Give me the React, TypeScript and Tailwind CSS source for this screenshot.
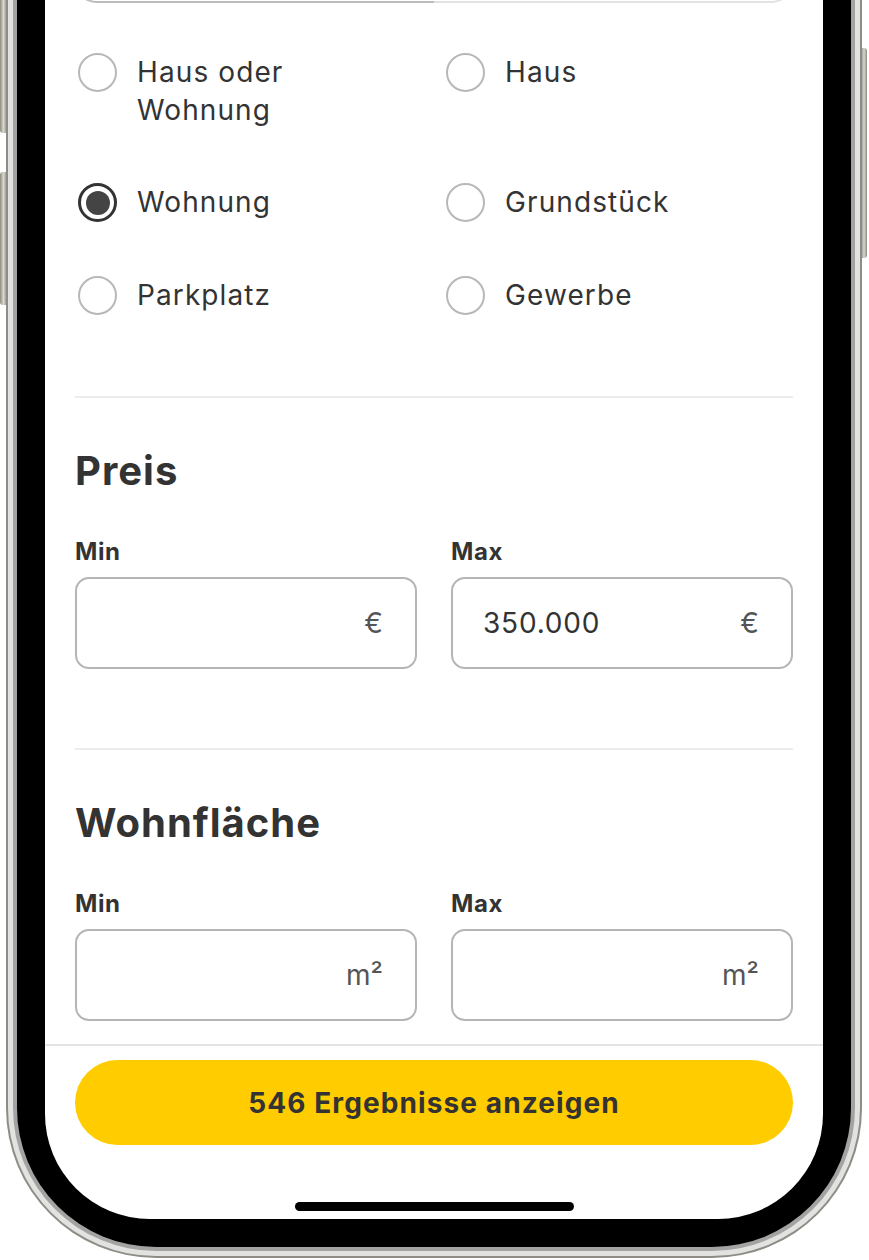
import type { ReactNode } from 'react';

const propertyTypes = [
  { label: 'Haus oder Wohnung', checked: false },
  { label: 'Haus', checked: false },
  { label: 'Wohnung', checked: true },
  { label: 'Grundstück', checked: false },
  { label: 'Parkplatz', checked: false },
  { label: 'Gewerbe', checked: false },
];

function Radio({ checked }: { checked: boolean }) {
  if (checked) {
    return (
      <span className="ml-[3px] flex h-[39px] w-[39px] shrink-0 items-center justify-center rounded-full border-[3px] border-[#333333] bg-white">
        <span className="h-[24px] w-[24px] rounded-full bg-[#444444]" />
      </span>
    );
  }
  return <span className="ml-[3px] block h-[39px] w-[39px] shrink-0 rounded-full border-2 border-[#b8b8b8] bg-white" />;
}

function Field({ label, value, unit }: { label: string; value?: string; unit: ReactNode }) {
  return (
    <div className="flex flex-col">
      <span className="text-[24px] leading-[32px] font-bold tracking-[0.6px] text-[#333333]">{label}</span>
      <div className="mt-[9px] flex h-[92px] items-center justify-between rounded-[14px] border-2 border-[#b5b5b5] pl-[30px] pr-[32px]">
        <span className="text-[28px] leading-[38px] tracking-[0.8px] text-[#333333]">{value}</span>
        <span className="text-[28px] leading-[38px] text-[#555555]">{unit}</span>
      </div>
    </div>
  );
}

function RangeSection({ title, unit, max }: { title: string; unit: ReactNode; max?: string }) {
  return (
    <section className="pt-[49px]">
      <h2 className="text-[40px] leading-[48px] font-bold tracking-[1px] text-[#333333]">{title}</h2>
      <div className="mt-[41px] grid grid-cols-2 gap-x-[34px]">
        <Field label="Min" unit={unit} />
        <Field label="Max" value={max} unit={unit} />
      </div>
    </section>
  );
}

export default function App() {
  return (
    <div className="relative h-[1260px] w-[869px] overflow-hidden bg-white" style={{ fontFamily: 'Inter, "Noto Sans", sans-serif' }}>
      {/* side buttons */}
      <div className="absolute left-0 top-[-10px] h-[143px] w-[7px] rounded-l-[3px] bg-gradient-to-r from-[#8f8c7c] via-[#d8d8d4] to-[#8a8a86]" />
      <div className="absolute left-0 top-[172px] h-[133px] w-[7px] rounded-l-[3px] bg-gradient-to-r from-[#8f8c7c] via-[#d8d8d4] to-[#8a8a86]" />
      <div className="absolute right-[2px] top-[48px] h-[210px] w-[6px] rounded-r-[3px] bg-gradient-to-r from-[#8a8a86] via-[#d8d8d4] to-[#8f8c7c]" />

      {/* phone frame */}
      <div className="relative ml-[6px] w-[856px] rounded-b-[150px] bg-[#8e8c84] px-[2px] pb-[2px]">
        <div className="rounded-b-[148px] bg-[#e2e2e0] px-[5px] pb-[5px]">
          <div className="rounded-b-[143px] bg-[#a3a3a1] px-[4px] pb-[4px]">
            <div className="rounded-b-[139px] bg-black px-[28px] pb-[28px]">
              <div className="flex h-[1219px] flex-col overflow-hidden rounded-b-[105px] bg-white">
                <div className="flex-1 overflow-hidden px-[30px]">
                  {/* bottom of segmented control above */}
                  <div className="-mt-[40px] flex h-[43px]">
                    <div className="w-1/2 rounded-l-[26px] border-2 border-r-0 border-[#bdbdbd]" />
                    <div className="w-1/2 rounded-r-[26px] border-2 border-l-0 border-[#e2e2e2]" />
                  </div>

                  <div className="mt-[50px] grid grid-cols-[368px_1fr] gap-y-[54px]">
                    {propertyTypes.map((item) => (
                      <label key={item.label} className="flex items-start gap-[20px]">
                        <Radio checked={item.checked} />
                        <span className="max-w-[190px] text-[28px] leading-[38px] tracking-[1.1px] text-[#333333]">{item.label}</span>
                      </label>
                    ))}
                  </div>

                  <div className="mt-[81px] h-[2px] bg-[#ececec]" />
                  <RangeSection title="Preis" unit="€" max="350.000" />

                  <div className="mt-[79px] h-[2px] bg-[#ececec]" />
                  <RangeSection title="Wohnfläche" unit="m²" />
                </div>

                <div className="border-t-2 border-[#e4e4e4] px-[30px] pt-[14px]">
                  <button className="flex h-[85px] w-full items-center justify-center rounded-full bg-[#ffcc00] text-[28px] font-bold tracking-[1.1px] text-[#333333]">
                    546 Ergebnisse anzeigen
                  </button>
                  <div className="flex justify-center pb-[8px] pt-[57px]">
                    <div className="h-[9px] w-[279px] rounded-full bg-black" />
                  </div>
                </div>
              </div>
            </div>
          </div>
        </div>
      </div>
    </div>
  );
}
